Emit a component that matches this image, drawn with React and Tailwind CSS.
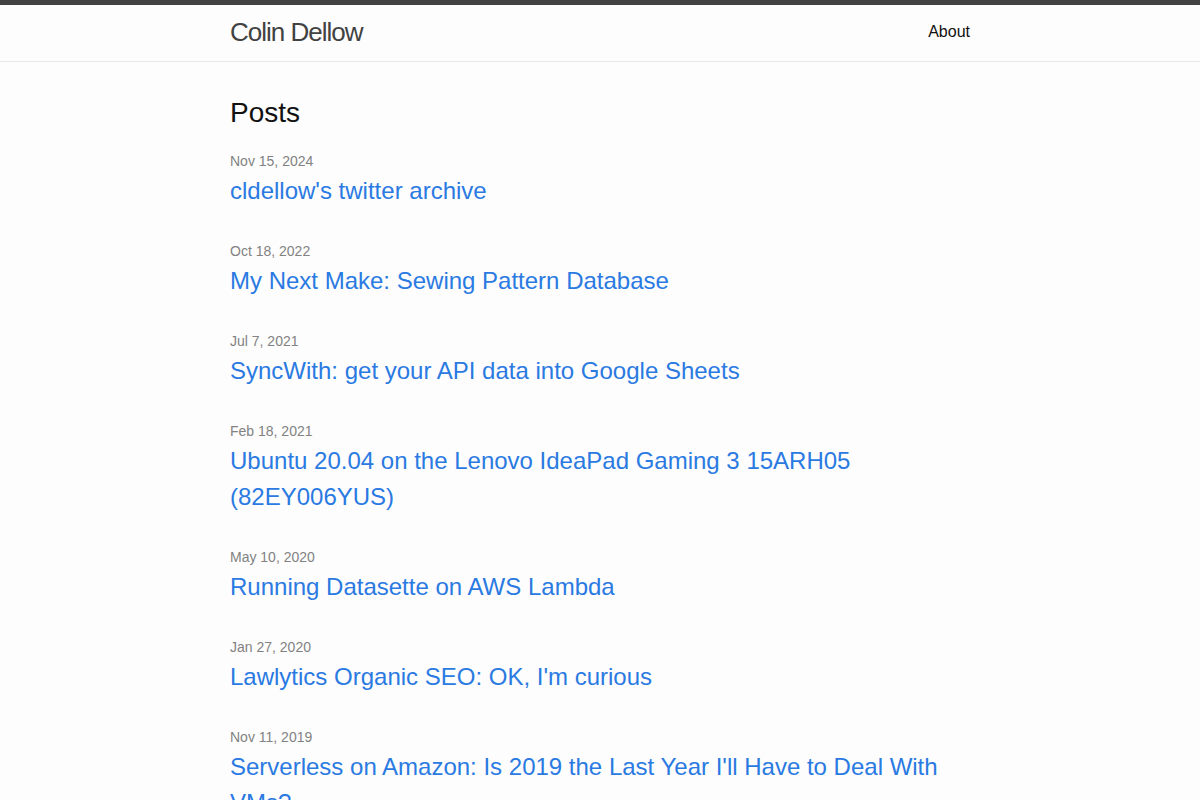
import React from 'react';

const posts = [
	{ date: 'Nov 15, 2024', title: "cldellow's twitter archive" },
	{ date: 'Oct 18, 2022', title: 'My Next Make: Sewing Pattern Database' },
	{ date: 'Jul 7, 2021', title: 'SyncWith: get your API data into Google Sheets' },
	{ date: 'Feb 18, 2021', title: 'Ubuntu 20.04 on the Lenovo IdeaPad Gaming 3 15ARH05 (82EY006YUS)' },
	{ date: 'May 10, 2020', title: 'Running Datasette on AWS Lambda' },
	{ date: 'Jan 27, 2020', title: "Lawlytics Organic SEO: OK, I'm curious" },
	{ date: 'Nov 11, 2019', title: "Serverless on Amazon: Is 2019 the Last Year I'll Have to Deal With VMs?" },
	{ date: 'Aug 2, 2019', title: 'Making a static site with Jekyll' },
];

export default function App() {
	return (
		<div
			className="min-h-screen bg-[#fdfdfd] text-[#111111] text-[16px] leading-[1.5]"
			style={{ fontFamily: '"Liberation Sans", Helvetica, Arial, sans-serif' }}
		>
			{/* header: dark top rule, title on the left, nav on the right */}
			<header className="border-t-[5px] border-t-[#424242] border-b border-b-[#e8e8e8] min-h-[62px]">
				<div className="max-w-[800px] mx-auto px-[30px] flex justify-between">
					<a className="text-[26px] font-light leading-[54px] tracking-[-1px] text-[#424242]" href="#">
						Colin Dellow
					</a>
					<nav className="leading-[54px]">
						<a className="text-[#111111]" href="#">About</a>
					</nav>
				</div>
			</header>

			<main className="py-[30px]">
				<div className="max-w-[800px] mx-auto px-[30px]">
					<h2 className="text-[28px] leading-[1.5] mb-[15px]">Posts</h2>
					<ul>
						{posts.map((post, index) => (
							<li key={index} className="mb-[30px]">
								<span className="text-[14px] text-[#828282] leading-[24px]">{post.date}</span>
								<h3 className="text-[24px] leading-[36px]">
									<a className="text-[#2a7ae2]" href="#">{post.title}</a>
								</h3>
							</li>
						))}
					</ul>
				</div>
			</main>
		</div>
	);
}
